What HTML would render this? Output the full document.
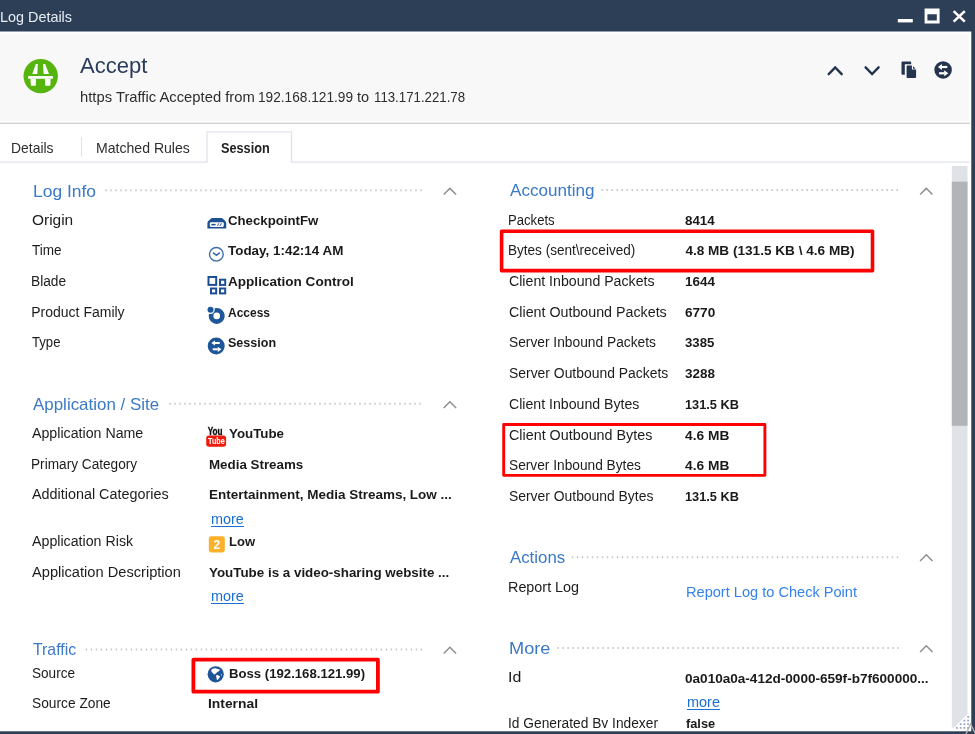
<!DOCTYPE html>
<html>
<head>
<meta charset="utf-8">
<title>Log Details</title>
<style>
html,body{margin:0;padding:0;}
body{width:975px;height:734px;overflow:hidden;position:relative;background:#fff;font-family:"Liberation Sans",sans-serif;}
#root{position:absolute;left:0;top:0;width:975px;height:734px;overflow:hidden;will-change:transform;background:#fff;}
.t{position:absolute;white-space:nowrap;line-height:1;}
.t span{display:inline-block;transform-origin:0 50%;}
svg{position:absolute;left:0;top:0;overflow:visible;}
</style>
</head>
<body>
<div id="root">

<!-- window chrome / structure -->
<svg width="975" height="734" viewBox="0 0 975 734">
<rect x="0" y="0" width="975" height="31.5" fill="#2d3e57"/>
<rect x="0" y="33.8" width="968.9" height="87.2" fill="#f8f8f8"/>
<rect x="0" y="122" width="970" height="1" fill="#ececec"/>
<rect x="0" y="123" width="970" height="1" fill="#d1d1d1"/>
<!-- tab strip -->
<g fill="none" stroke="#dfe4ea" stroke-width="1.3">
<path d="M0 162.2H207V131.9H291.5V162.2H970"/>
</g>
<rect x="81" y="137" width="1" height="19.6" fill="#dde2e9"/>
<!-- scrollbar -->
<rect x="951.8" y="166" width="15.7" height="561.6" fill="#dfe3e8"/>
<rect x="951.8" y="181.6" width="15.7" height="244.2" fill="#b2b5b8"/>
<!-- dotted section lines -->
<g stroke="#c6c6c6" stroke-width="2" stroke-dasharray="1.4 3.6" fill="none">
<path d="M105.3 190.2H422.4"/>
<path d="M169.3 403.8H422.4"/>
<path d="M85.7 649.4H422.4"/>
<path d="M601.5 190.1H899.4"/>
<path d="M571.8 557.2H899.4"/>
<path d="M557.4 648H899.4"/>
</g>
</svg>

<svg width="975" height="734" viewBox="0 0 975 734">
<!-- window controls -->
<g fill="#ffffff">
<rect x="897.8" y="19" width="15" height="3.4"/>
<path fill-rule="evenodd" d="M924.6 8.6H939.6V23.4H924.6Z M927.4 14.3H936.8V20.6H927.4Z"/>
</g>
<path d="M953.6 11.1L964.8 21.6M964.8 11.1L953.6 21.6" stroke="#ffffff" stroke-width="2.6" fill="none"/>

<!-- accept icon -->
<circle cx="40.7" cy="76.1" r="17.2" fill="#56b40f"/>
<g fill="#ffffff">
<polygon points="35.8,64 37.9,64 37.3,73.9 32.3,73.9"/>
<polygon points="43.1,64 45.1,64 49,73.9 43.6,73.9"/>
<rect x="28.1" y="76.1" width="24.8" height="2.6"/>
<polygon points="30.4,78.6 36.1,78.6 35.7,85.8 30.9,85.8"/>
<polygon points="44.8,78.6 50.7,78.6 50.3,85.8 45.3,85.8"/>
</g>

<!-- header nav icons -->
<g stroke="#24344f" stroke-width="2.4" fill="none" stroke-linecap="round" stroke-linejoin="miter">
<path d="M828.7 74.2L835.2 67.5L841.7 74.2"/>
<path d="M865.6 67.3L872.1 74.1L878.6 67.3"/>
</g>
<g fill="#24344f">
<path d="M901.5 62.5Q901.5 61.5 902.5 61.5H910.3Q911.2 61.5 911.2 62.5V64.3H904.8V74.8H902.5Q901.5 74.8 901.5 73.8Z"/>
<path d="M906.6 66.4Q906.6 65.4 907.6 65.4H911.9V69.6H916.1V77.1Q916.1 78.1 915.1 78.1H907.6Q906.6 78.1 906.6 77.1Z"/>
<path d="M913 66.2L915.6 68.7H913Z"/>
<circle cx="943.1" cy="69.9" r="8.75"/>
</g>
<g fill="#ffffff">
<polygon points="937.9,67 942,64 942,70"/>
<rect x="941.8" y="65.9" width="5.5" height="2.2"/>
<polygon points="948.3,73.3 944.2,70.3 944.2,76.3"/>
<rect x="939" y="72.2" width="5.5" height="2.2"/>
</g>

<!-- section chevrons -->
<g stroke="#8e8e8e" stroke-width="1.45" fill="none" stroke-linejoin="miter">
<path d="M443.7 194.6L449.9 188.4L456.1 194.6"/>
<path d="M443.7 408L449.9 401.8L456.1 408"/>
<path d="M443.7 653.5L449.9 647.3L456.1 653.5"/>
<path d="M920.1 194.6L926.3 188.4L932.5 194.6"/>
<path d="M920.1 561L926.3 554.8L932.5 561"/>
<path d="M920.1 651.9L926.3 645.7L932.5 651.9"/>
</g>

<!-- origin (gateway) icon -->
<path d="M207.4 228.4V223.2Q207.4 222 208.3 221.1L210.5 218.9Q211.3 218.1 212.5 218.1H221.1Q222.3 218.1 223.1 218.9L225.3 221.1Q226.2 222 226.2 223.2V228.4Z" fill="#1d4f93"/>
<rect x="209.8" y="222.3" width="14" height="4.6" rx="1.3" fill="#ffffff"/>
<rect x="211.3" y="223.9" width="4.3" height="1.5" fill="#1d4f93"/>
<path d="M217.4 226.1L218.9 223.2M219.9 226.1L221.4 223.2" stroke="#1d4f93" stroke-width="0.9" fill="none"/>

<!-- time icon -->
<circle cx="216.35" cy="254.25" r="6.85" fill="none" stroke="#4170ad" stroke-width="1.45"/>
<path d="M213 252.6L216.4 255.4L219.8 252.6" fill="none" stroke="#3a69a8" stroke-width="1.5"/>

<!-- blade icon -->
<g fill="none" stroke="#1d4f93" stroke-width="2">
<rect x="208.5" y="277" width="7.7" height="7.9"/>
<rect x="220" y="279.7" width="5.2" height="5.2"/>
<rect x="211" y="288.5" width="5.2" height="4.9"/>
<rect x="220" y="288.5" width="5.2" height="4.9"/>
</g>

<!-- access icon -->
<circle cx="216.7" cy="315.9" r="5.65" fill="none" stroke="#1e5799" stroke-width="4.7"/>
<circle cx="210.5" cy="309.8" r="4.2" fill="#ffffff"/>
<circle cx="210.5" cy="309.8" r="3" fill="#1e5799"/>

<!-- session icon -->
<circle cx="216.2" cy="346" r="8.5" fill="#1e5799"/>
<g fill="#ffffff">
<polygon points="211.4,343 215,340.4 215,345.6"/>
<rect x="214.9" y="342" width="4.8" height="2"/>
<polygon points="221.4,349.3 217.8,346.7 217.8,351.9"/>
<rect x="212.7" y="348.3" width="5.2" height="2"/>
</g>

<!-- youtube icon -->
<rect x="206.2" y="435.5" width="19.9" height="11.2" rx="2.6" fill="#ee1c0c"/>
<text x="207.7" y="434.5" font-family="Liberation Sans, sans-serif" font-weight="700" font-size="10.2" fill="#111" stroke="#111" stroke-width="0.35" textLength="14.9" lengthAdjust="spacingAndGlyphs">You</text>
<text x="208" y="444.3" font-family="Liberation Sans, sans-serif" font-weight="700" font-size="9.6" fill="#ffffff" textLength="16.8" lengthAdjust="spacingAndGlyphs">Tube</text>

<!-- risk icon -->
<rect x="208.8" y="536.3" width="16" height="16.1" rx="2.3" fill="#fdb02a"/>
<text x="213.5" y="549.1" font-family="Liberation Sans, sans-serif" font-weight="700" font-size="12" fill="#ffffff">2</text>

<!-- globe icon -->
<circle cx="215.7" cy="674.3" r="8.1" fill="#1f5496"/>
<g fill="#ffffff">
<polygon points="211.1,670.7 212.3,668.8 215.2,668.2 219.7,669.6 219.3,670.9 217.2,671.9 216,673.5 214.2,674.4 212.7,673.1 211.5,671.5"/>
<polygon points="215.8,675.4 217.6,675 220.1,676.4 219.3,678.1 217.6,680.1 216.8,679.7 216.4,677.2"/>
<polygon points="221.1,674.2 221.9,674.2 221.7,675.8 221.1,675.6"/>
</g>

<!-- resize grip -->
<polygon points="968.2,713.5 968.2,729.5 952,729.5" fill="#ffffff"/>
<g fill="#8c9dc6">
<rect x="967.25" y="716.05" width="1.7" height="1.7"/>
<rect x="963.55" y="719.70" width="1.7" height="1.7"/>
<rect x="967.25" y="719.70" width="1.7" height="1.7"/>
<rect x="959.80" y="723.35" width="1.7" height="1.7"/>
<rect x="963.55" y="723.35" width="1.7" height="1.7"/>
<rect x="967.25" y="723.35" width="1.7" height="1.7"/>
<rect x="956.05" y="727.05" width="1.7" height="1.7"/>
<rect x="959.80" y="727.05" width="1.7" height="1.7"/>
<rect x="963.55" y="727.05" width="1.7" height="1.7"/>
<rect x="967.25" y="727.05" width="1.7" height="1.7"/>
</g>
</svg>


<div class="t" style="left:-0.48px;top:10px;font-size:14.3px;font-weight:400;color:#e9edf3;"><span style="transform:scaleX(1.0066);">Log Details</span></div>
<div class="t" style="left:80.46px;top:55px;font-size:22.3px;font-weight:400;color:#2b3c5a;"><span style="transform:scaleX(0.9887);">Accept</span></div>
<div class="t" style="left:79.67px;top:90px;font-size:14.5px;font-weight:400;color:#2e2e2e;"><span style="transform:scaleX(1.0198);">https Traffic Accepted from</span></div>
<div class="t" style="left:257.56px;top:90px;font-size:14.5px;font-weight:400;color:#2e2e2e;"><span style="transform:scaleX(0.9434);">192.168.121.99</span></div>
<div class="t" style="left:356.98px;top:90px;font-size:14.5px;font-weight:400;color:#2e2e2e;"><span style="transform:scaleX(1.0031);">to</span></div>
<div class="t" style="left:373.99px;top:90px;font-size:14.5px;font-weight:400;color:#2e2e2e;"><span style="transform:scaleX(0.9134);">113.171.221.78</span></div>
<div class="t" style="left:10.96px;top:141px;font-size:14.2px;font-weight:400;color:#2e2e2e;"><span style="transform:scaleX(0.9809);">Details</span></div>
<div class="t" style="left:96.34px;top:141px;font-size:14.2px;font-weight:400;color:#2e2e2e;"><span style="transform:scaleX(0.9918);">Matched Rules</span></div>
<div class="t" style="left:220.53px;top:141px;font-size:14.2px;font-weight:700;color:#222;"><span style="transform:scaleX(0.8959);">Session</span></div>
<div class="t" style="left:32.97px;top:184px;font-size:16.6px;font-weight:400;color:#3a79c8;"><span style="transform:scaleX(1.0513);">Log Info</span></div>
<div class="t" style="left:33.47px;top:397px;font-size:16.6px;font-weight:400;color:#3a79c8;"><span style="transform:scaleX(1.0200);">Application / Site</span></div>
<div class="t" style="left:33.34px;top:642px;font-size:16.6px;font-weight:400;color:#3a79c8;"><span style="transform:scaleX(0.9532);">Traffic</span></div>
<div class="t" style="left:509.77px;top:183px;font-size:16.6px;font-weight:400;color:#3a79c8;"><span style="transform:scaleX(1.0295);">Accounting</span></div>
<div class="t" style="left:509.87px;top:550px;font-size:16.6px;font-weight:400;color:#3a79c8;"><span style="transform:scaleX(1.0132);">Actions</span></div>
<div class="t" style="left:509.31px;top:641px;font-size:16.6px;font-weight:400;color:#3a79c8;"><span style="transform:scaleX(1.0948);">More</span></div>
<div class="t" style="left:31.67px;top:213px;font-size:14px;font-weight:400;color:#1c1c1c;"><span style="transform:scaleX(1.1037);">Origin</span></div>
<div class="t" style="left:32.10px;top:243px;font-size:14px;font-weight:400;color:#1c1c1c;"><span style="transform:scaleX(0.9677);">Time</span></div>
<div class="t" style="left:31.27px;top:274px;font-size:14px;font-weight:400;color:#1c1c1c;"><span style="transform:scaleX(0.9811);">Blade</span></div>
<div class="t" style="left:31.25px;top:305px;font-size:14px;font-weight:400;color:#1c1c1c;"><span style="">Product Family</span></div>
<div class="t" style="left:32.11px;top:335px;font-size:14px;font-weight:400;color:#1c1c1c;"><span style="transform:scaleX(0.9380);">Type</span></div>
<div class="t" style="left:32.37px;top:426px;font-size:14px;font-weight:400;color:#1c1c1c;"><span style="transform:scaleX(1.0139);">Application Name</span></div>
<div class="t" style="left:31.28px;top:457px;font-size:14px;font-weight:400;color:#1c1c1c;"><span style="transform:scaleX(0.9745);">Primary Category</span></div>
<div class="t" style="left:32.37px;top:487px;font-size:14px;font-weight:400;color:#1c1c1c;"><span style="transform:scaleX(1.0267);">Additional Categories</span></div>
<div class="t" style="left:32.37px;top:534px;font-size:14px;font-weight:400;color:#1c1c1c;"><span style="transform:scaleX(1.0150);">Application Risk</span></div>
<div class="t" style="left:32.37px;top:565px;font-size:14px;font-weight:400;color:#1c1c1c;"><span style="transform:scaleX(1.0455);">Application Description</span></div>
<div class="t" style="left:31.78px;top:666px;font-size:14px;font-weight:400;color:#1c1c1c;"><span style="transform:scaleX(0.9698);">Source</span></div>
<div class="t" style="left:31.78px;top:696px;font-size:14px;font-weight:400;color:#1c1c1c;"><span style="transform:scaleX(0.9821);">Source Zone</span></div>
<div class="t" style="left:228.26px;top:214px;font-size:13.6px;font-weight:700;color:#1a1a1a;"><span style="transform:scaleX(0.9721);">CheckpointFw</span></div>
<div class="t" style="left:228.25px;top:244px;font-size:13.6px;font-weight:700;color:#1a1a1a;"><span style="transform:scaleX(0.9872);">Today, 1:42:14 AM</span></div>
<div class="t" style="left:228.26px;top:275px;font-size:13.6px;font-weight:700;color:#1a1a1a;"><span style="transform:scaleX(0.9975);">Application Control</span></div>
<div class="t" style="left:228.30px;top:306px;font-size:13.6px;font-weight:700;color:#1a1a1a;"><span style="transform:scaleX(0.8817);">Access</span></div>
<div class="t" style="left:228.44px;top:336px;font-size:13.6px;font-weight:700;color:#1a1a1a;"><span style="transform:scaleX(0.9233);">Session</span></div>
<div class="t" style="left:228.77px;top:427px;font-size:13.6px;font-weight:700;color:#1a1a1a;"><span style="transform:scaleX(0.9794);">YouTube</span></div>
<div class="t" style="left:209.11px;top:458px;font-size:13.6px;font-weight:700;color:#1a1a1a;"><span style="transform:scaleX(0.9822);">Media Streams</span></div>
<div class="t" style="left:209.10px;top:488px;font-size:13.6px;font-weight:700;color:#1a1a1a;"><span style="transform:scaleX(0.9922);">Entertainment, Media Streams, Low ...</span></div>
<div class="t" style="left:210.54px;top:512px;font-size:14px;font-weight:400;color:#1a6fd4;"><span style="text-decoration:underline;text-underline-offset:1.5px;transform:scaleX(1.0311);">more</span></div>
<div class="t" style="left:228.53px;top:535px;font-size:13.6px;font-weight:700;color:#1a1a1a;"><span style="transform:scaleX(0.9580);">Low</span></div>
<div class="t" style="left:209.37px;top:566px;font-size:13.6px;font-weight:700;color:#1a1a1a;"><span style="transform:scaleX(0.9837);">YouTube is a video-sharing website ...</span></div>
<div class="t" style="left:210.54px;top:589px;font-size:14px;font-weight:400;color:#1a6fd4;"><span style="text-decoration:underline;text-underline-offset:1.5px;transform:scaleX(1.0311);">more</span></div>
<div class="t" style="left:229.22px;top:667px;font-size:13.6px;font-weight:700;color:#1a1a1a;"><span style="transform:scaleX(0.9677);">Boss (192.168.121.99)</span></div>
<div class="t" style="left:208.37px;top:697px;font-size:13.6px;font-weight:700;color:#1a1a1a;"><span style="transform:scaleX(1.0183);">Internal</span></div>
<div class="t" style="left:507.92px;top:213px;font-size:14px;font-weight:400;color:#1c1c1c;"><span style="transform:scaleX(0.9365);">Packets</span></div>
<div class="t" style="left:507.89px;top:243px;font-size:14px;font-weight:400;color:#1c1c1c;"><span style="transform:scaleX(0.9677);">Bytes (sent\received)</span></div>
<div class="t" style="left:508.68px;top:274px;font-size:14px;font-weight:400;color:#1c1c1c;"><span style="transform:scaleX(1.0107);">Client Inbound Packets</span></div>
<div class="t" style="left:508.68px;top:305px;font-size:14px;font-weight:400;color:#1c1c1c;"><span style="transform:scaleX(1.0185);">Client Outbound Packets</span></div>
<div class="t" style="left:508.57px;top:335px;font-size:14px;font-weight:400;color:#1c1c1c;"><span style="transform:scaleX(0.9833);">Server Inbound Packets</span></div>
<div class="t" style="left:508.57px;top:366px;font-size:14px;font-weight:400;color:#1c1c1c;"><span style="transform:scaleX(0.9933);">Server Outbound Packets</span></div>
<div class="t" style="left:508.68px;top:397px;font-size:14px;font-weight:400;color:#1c1c1c;"><span style="transform:scaleX(1.0095);">Client Inbound Bytes</span></div>
<div class="t" style="left:508.67px;top:428px;font-size:14px;font-weight:400;color:#1c1c1c;"><span style="transform:scaleX(1.0232);">Client Outbound Bytes</span></div>
<div class="t" style="left:508.58px;top:458px;font-size:14px;font-weight:400;color:#1c1c1c;"><span style="transform:scaleX(0.9798);">Server Inbound Bytes</span></div>
<div class="t" style="left:508.57px;top:489px;font-size:14px;font-weight:400;color:#1c1c1c;"><span style="transform:scaleX(0.9918);">Server Outbound Bytes</span></div>
<div class="t" style="left:507.82px;top:580px;font-size:14px;font-weight:400;color:#1c1c1c;"><span style="transform:scaleX(1.0263);">Report Log</span></div>
<div class="t" style="left:507.73px;top:670px;font-size:14px;font-weight:400;color:#1c1c1c;"><span style="transform:scaleX(1.1377);">Id</span></div>
<div class="t" style="left:508.13px;top:716px;font-size:14px;font-weight:400;color:#1c1c1c;"><span style="transform:scaleX(0.9833);">Id Generated By Indexer</span></div>
<div class="t" style="left:684.98px;top:214px;font-size:13.6px;font-weight:700;color:#1a1a1a;"><span style="transform:scaleX(0.9817);">8414</span></div>
<div class="t" style="left:685.39px;top:244px;font-size:13.6px;font-weight:700;color:#1a1a1a;"><span style="">4.8 MB (131.5 KB \ 4.6 MB)</span></div>
<div class="t" style="left:684.95px;top:275px;font-size:13.6px;font-weight:700;color:#1a1a1a;"><span style="transform:scaleX(0.9891);">1644</span></div>
<div class="t" style="left:685.00px;top:306px;font-size:13.6px;font-weight:700;color:#1a1a1a;"><span style="">6770</span></div>
<div class="t" style="left:685.20px;top:336px;font-size:13.6px;font-weight:700;color:#1a1a1a;"><span style="transform:scaleX(0.9709);">3385</span></div>
<div class="t" style="left:685.19px;top:367px;font-size:13.6px;font-weight:700;color:#1a1a1a;"><span style="transform:scaleX(0.9892);">3288</span></div>
<div class="t" style="left:685.20px;top:398px;font-size:13.6px;font-weight:700;color:#1a1a1a;"><span style="transform:scaleX(0.9381);">131.5 KB</span></div>
<div class="t" style="left:685.29px;top:429px;font-size:13.6px;font-weight:700;color:#1a1a1a;"><span style="transform:scaleX(1.0115);">4.6 MB</span></div>
<div class="t" style="left:685.29px;top:459px;font-size:13.6px;font-weight:700;color:#1a1a1a;"><span style="transform:scaleX(1.0115);">4.6 MB</span></div>
<div class="t" style="left:685.20px;top:490px;font-size:13.6px;font-weight:700;color:#1a1a1a;"><span style="transform:scaleX(0.9381);">131.5 KB</span></div>
<div class="t" style="left:686.10px;top:584px;font-size:15px;font-weight:400;color:#3581ea;"><span style="transform:scaleX(0.9720);">Report Log to Check Point</span></div>
<div class="t" style="left:685.36px;top:672px;font-size:13.6px;font-weight:700;color:#1a1a1a;"><span style="transform:scaleX(0.9978);">0a010a0a-412d-0000-659f-b7f600000...</span></div>
<div class="t" style="left:687.04px;top:695px;font-size:14px;font-weight:400;color:#1a6fd4;"><span style="text-decoration:underline;text-underline-offset:1.5px;transform:scaleX(1.0344);">more</span></div>
<div class="t" style="left:685.58px;top:717px;font-size:13.6px;font-weight:700;color:#1a1a1a;"><span style="transform:scaleX(0.9410);">false</span></div>

<svg width="975" height="734" viewBox="0 0 975 734">
<!-- clip bottom of scrolled content -->
<rect x="0" y="728" width="951" height="4" fill="#ffffff"/>
<!-- red highlight boxes -->
<g fill="none" stroke="#fe0000" stroke-linejoin="round">
<rect x="501.6" y="231.25" width="370.9" height="39.4" stroke-width="3.6"/>
<rect x="503.7" y="424.45" width="261.2" height="50.9" stroke-width="2.9"/>
<rect x="193.4" y="659.7" width="184.5" height="32" stroke-width="3.8"/>
</g>
<!-- window borders -->
<rect x="971.3" y="0" width="3.7" height="734" fill="#2d3e57"/>
<rect x="0" y="731.3" width="975" height="2.7" fill="#2d3e57"/>
<path d="M965.8 734.5L970.6 724L975.6 734" fill="none" stroke="#b4b4b4" stroke-width="1.4"/>
</svg>
</div>
</body>
</html>
